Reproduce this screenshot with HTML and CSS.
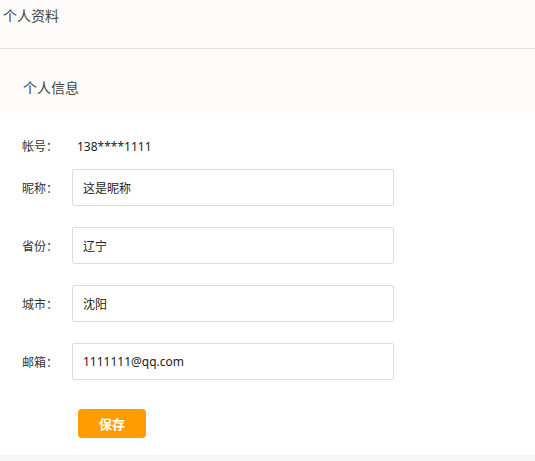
FILE: index.html
```html
<!DOCTYPE html>
<html lang="zh-CN">
<head>
<meta charset="utf-8">
<title>个人资料</title>
<link rel="stylesheet" href="styles.css">
</head>
<body>
<div class="page">
  <div class="header">个人资料</div>
  <div class="section-title">个人信息</div>
  <div class="content">
    <div class="row row-account">
      <span class="label">帐号：</span>
      <span class="value">138****1111</span>
    </div>
    <div class="row">
      <span class="label">昵称：</span>
      <input class="field" type="text" value="这是昵称">
    </div>
    <div class="row">
      <span class="label">省份：</span>
      <input class="field" type="text" value="辽宁">
    </div>
    <div class="row">
      <span class="label">城市：</span>
      <input class="field" type="text" value="沈阳">
    </div>
    <div class="row">
      <span class="label">邮箱：</span>
      <input class="field" type="text" value="1111111@qq.com">
    </div>
    <div class="actions">
      <button class="save" type="button">保存</button>
    </div>
  </div>
  <div class="footer"></div>
</div>
</body>
</html>
```

FILE: styles.css
```css
html, body {
  margin: 0;
  padding: 0;
}
body {
  background: #fdfcfb;
  font-family: "Noto Sans", "Noto Sans CJK SC", sans-serif;
  color: #333;
}
.page {
  display: flex;
  flex-direction: column;
  min-height: 461px;
}
.header {
  box-sizing: border-box;
  height: 49px;
  padding: 7px 0 0 3px;
  font-size: 14px;
  line-height: 18px;
  color: #444;
  border-bottom: 1px solid #e2e1df;
}
.section-title {
  box-sizing: border-box;
  height: 64px;
  padding: 30px 0 0 23px;
  font-size: 14px;
  line-height: 18px;
  color: #444;
}
.content {
  background: #fff;
  display: flex;
  flex-direction: column;
  gap: 21px;
  padding: 21px 0 17px 0;
}
.row {
  display: flex;
  align-items: center;
}
.row-account {
  height: 24px;
  margin-bottom: -10px;
}
.label {
  box-sizing: border-box;
  width: 72px;
  padding-left: 22px;
  font-size: 12px;
  color: #333;
}
.value {
  margin-left: 5px;
  font-size: 12px;
  color: #222;
}
.field {
  box-sizing: border-box;
  width: 322px;
  height: 37px;
  margin: 0;
  padding: 0 10px;
  border: 1px solid #dcdcdc;
  border-radius: 2px;
  background: #fff;
  font-family: "Noto Sans", "Noto Sans CJK SC", sans-serif;
  font-size: 12px;
  color: #222;
  outline: none;
}
.actions {
  padding-left: 78px;
  margin-top: 8px;
}
.save {
  width: 68px;
  height: 29px;
  border: none;
  border-radius: 4px;
  background: #ff9d00;
  color: #fff;
  font-family: "Noto Sans CJK SC", sans-serif;
  font-size: 13px;
  font-weight: bold;
  padding: 0;
}
.footer {
  flex: 1;
  background: #f6f6f6;
}
```
